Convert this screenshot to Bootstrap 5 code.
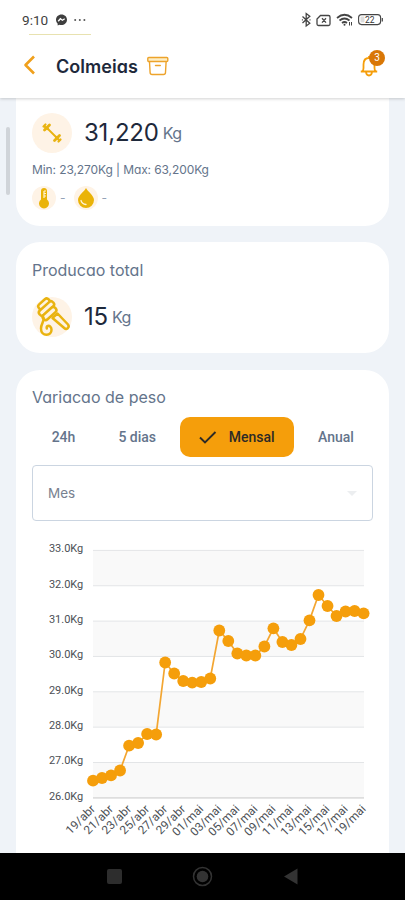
<!DOCTYPE html>
<html lang="pt">
<head>
<meta charset="utf-8">
<meta name="viewport" content="width=device-width, initial-scale=1">
<title>Colmeias</title>
<link href="https://cdn.jsdelivr.net/npm/bootstrap@5.3.0/dist/css/bootstrap.min.css" rel="stylesheet">
<style>
body{height:900px;overflow:hidden;background:#eff3f8;font-family:Inter,"Liberation Sans",sans-serif;font-feature-settings:"cv11";color:#1e293b}
svg{display:block;flex:none}
svg text{font-family:Roboto,sans-serif}
.status{height:40px;padding:0 22px;font:400 13.6px/40px Roboto,sans-serif;color:#3f3f3f}
.dots{margin-left:7px}
.title-bar{height:58px;padding:0 16px 6px 22px}
.top{background:#fff;box-shadow:0 1px 3px rgba(0,0,0,.18);z-index:2}
.underline-tab{left:29px;top:34px;width:62px;height:1px;background:#e8e2b0}
.title{font-size:18px;font-weight:600;letter-spacing:.05px;line-height:26px;margin-left:19px;padding-top:1px}
.box-icon{margin-left:9px}
.bell{margin-right:11px}
.bell-count{left:9px;top:-5px;width:16px;height:16px;background:#d97706;color:#fff;font:400 10px/16px Roboto,sans-serif}
.page-body{height:755px;padding:0 16px}
.scroll-thumb{left:6px;top:29px;width:4px;height:68px;border-radius:2px;background:#d0d4d9}
.panel{background:#fff;border-radius:24px;padding:0 16px}
.panel-weight{height:128px;border-radius:0 0 24px 24px;padding-top:14px}
.panel-total{height:111px;margin-top:16px;padding-top:16px}
.panel-chart{height:530px;margin-top:17px;padding-top:15px}
.round{width:40px;height:40px;background:#fef3e6}
.round-sm{width:24px;height:24px;background:#fef3e6}
.value{font-size:24px;line-height:36px;margin-left:12px;padding-top:3px;letter-spacing:-.2px}
.unit{font-size:16px;color:#64748b;margin-left:4px;letter-spacing:-.5px;position:relative;top:-2px}
.range{font-size:12px;line-height:18px;color:#64748b;margin-top:8px;letter-spacing:-.1px}
.readings{margin-top:7px}
.dash{font-size:12px;color:#94a3b8}
.drop-wrap{margin-left:8px}
.heading{font-size:16px;font-weight:400;line-height:24px;color:#64748b;letter-spacing:0}
.total-row{margin-top:14px}
.tabs{height:40px;margin-top:8px}
.tabs button{border:0;background:none;padding:0;font:500 14px/39px Roboto,sans-serif;color:#64748b;height:40px}
.tabs .active{background:#f59e0b;color:#2d2a26;border-radius:10px;width:114.5px}
.tabs .tab-a{flex:0 0 63px}
.tabs .tab-b{flex:0 0 84.5px}
.tabs .tab-d{flex:0 0 84px;margin-right:-6px}
.mensal{margin-left:12px}
.picker{height:56px;margin-top:8px;border:1px solid #cbd5e1;border-radius:4px;padding:0 15px;font-size:13.5px;color:#78818f}
.android{height:47px;background:#000}
</style>
<script src="https://cdn.jsdelivr.net/npm/bootstrap@5.3.0/dist/js/bootstrap.bundle.min.js"></script>
</head>
<body>
<header class="top position-relative">
 <div class="status d-flex align-items-center">
  <span>9:10</span>
  <svg class="ms-2" width="11" height="12" viewBox="0 0 11 12"><path d="M5.5 .5C2.3.5 0 2.8 0 5.8c0 1.5.6 2.8 1.6 3.8L1.7 11.5 3.4 10.8c3.9 1.1 7.6-1.300 7.6-5C11 2.800 8.700.5 5.500.5z" fill="#3f3f3f"/><path d="M2.200 7.200l2.200-2.500 2 1.500 2.300-1.500" fill="none" stroke="#fff" stroke-width="1.300"/></svg>
  <svg class="dots" width="12" height="4" viewBox="0 0 12 4" fill="#555"><circle cx="1.200" cy="2" r="1"/><circle cx="5.800" cy="2" r="1"/><circle cx="10.400" cy="2" r="1"/></svg>
  <svg class="ms-auto" width="83" height="16" viewBox="300 12 83 16" fill="none" stroke="#444" stroke-width="1.300"><path d="M302.500 16.500l7.300 6.800-3.600 2.700v-12.500l3.600 2.700-7.300 6.800"/><path d="M301.900 19.800h1M309.500 19.800h1"/><path d="M320.500 15.500h8q1.500 0 1.500 1.500v7q0 1.500-1.500 1.500h-10q-1.500 0-1.500-1.500v-5zM322 18.300l4 4.300m0-4.300l-4 4.300"/><path d="M337 18q7.500-6.500 15 0M339.500 20.500q5-4 10 0M342 23q2.500-2 5 0" stroke-width="1.700"/><circle cx="344.500" cy="24.700" r="1" fill="#444" stroke="none"/><path d="M349.500 22v3.500m2-3.500v3.500" stroke-width="1"/><rect x="358.600" y="14.600" width="22" height="10" rx="3" stroke-width="1.100"/><rect x="360.500" y="16.500" width="4" height="6" rx="1" fill="#ddd" stroke="none"/><path d="M382.300 18v3.500" stroke-width="1.200"/><text x="369.800" y="22.800" font-size="8.500" text-anchor="middle" fill="#333" stroke="none">22</text></svg>
 </div>
 <div class="position-absolute underline-tab"></div>
 <div class="title-bar d-flex align-items-center">
  <svg width="15" height="22" viewBox="0 0 15 22"><path d="M12 1.500L3.500 10 12 18.500" fill="none" stroke="#f0a01c" stroke-width="2.600" stroke-linejoin="round"/></svg>
  <h1 class="title mb-0">Colmeias</h1>
  <svg class="box-icon" width="22" height="20" viewBox="0 0 22 20" fill="none" stroke="#eda32b" stroke-width="1.400"><rect x=".8" y="1.500" width="20" height="4" rx="1" fill="#fdeec6"/><path d="M2.500 5.800l.6 10.700q.1 2 2 2h11.400q1.900 0 2-2l.6-10.700M8.500 9.500h4.800" stroke-linecap="round"/></svg>
  <div class="position-relative ms-auto bell">
   <svg width="18" height="22" viewBox="1 0 18 22" fill="none" stroke="#f59e0b" stroke-width="1.800" stroke-linejoin="round"><path d="M10 1v2M1.800 16.500h16.400M3.200 16.500q1.300-1 1.300-3.500V9.500C4.500 5.600 6.500 3 10 3s5.500 2.600 5.500 6.500v3.500q0 2.500 1.300 3.500M7 17q.4 3.500 3 3.500t3-3.500"/></svg>
   <span class="position-absolute rounded-circle text-center bell-count">3</span>
  </div>
 </div>
</header>
<main class="page-body position-relative overflow-hidden">
 <div class="position-absolute scroll-thumb"></div>
 <section class="panel panel-weight">
  <div class="d-flex align-items-center">
   <div class="round rounded-circle d-flex align-items-center justify-content-center"><svg width="22" height="22" viewBox="0 0 22 22" stroke="#e9b310" stroke-linecap="round"><path d="M6 6l10 10" stroke-width="1.800"/><path d="M3.500 8L8.500 3M13.500 18.500l5-5" stroke-width="2.800"/><path d="M2.500 4.500l2-2M4 5l3 2M17.500 19.500l2-2M15 15l3 3" stroke-width="2.200"/></svg></div>
   <div class="value">31,220<span class="unit">Kg</span></div>
  </div>
  <div class="range">Min: 23,270Kg | Max: 63,200Kg</div>
  <div class="d-flex align-items-center readings dash">
   <div class="round-sm rounded-circle d-flex align-items-center justify-content-center"><svg width="12" height="22" viewBox="0 0 12 22"><path d="M3 4a3 3 0 0 1 6 0v8.500a5 5 0 1 1-6 0z" fill="#eab308"/><path d="M6 4v7M6 4h2M6 6.500h2M6 9h2" stroke="#fff3d6" stroke-width="1.200"/></svg></div>
   <span class="ms-1">-</span>
   <div class="round-sm rounded-circle d-flex align-items-center justify-content-center drop-wrap"><svg width="18" height="22" viewBox="0 0 18 22"><path d="M9 1C7.500 4.500 1 8.300 1 13a8 8 0 0 0 16 0C17 8.300 10.500 4.500 9 1z" fill="#eab308"/><path d="M4 13.500q1 3.500 5 4" fill="none" stroke="#fff3d6" stroke-width="1.300" stroke-linecap="round"/></svg></div>
   <span class="ms-1">-</span>
  </div>
 </section>
 <section class="panel panel-total">
  <h2 class="heading mb-0">Producao total</h2>
  <div class="d-flex align-items-center total-row">
   <div class="round rounded-circle"><svg width="40" height="40" viewBox="32 297 40 40" fill="none" stroke="#e9b310" stroke-width="2.500" stroke-linecap="round" stroke-linejoin="round"><g fill="#fef3e2"><path d="M53.500 317l4-3.500 10.500 11q1.500 2-.2 3.700-1.800 1.500-3.600-.2L52.500 318z"/><rect x="37.500" y="301" width="13" height="6" rx="2.700" transform="rotate(-42 44 304)"/><rect x="37.500" y="305.500" width="18" height="6" rx="2.700" transform="rotate(-42 46.500 308.500)"/><rect x="41.500" y="310.500" width="16" height="6" rx="2.700" transform="rotate(-42 49.500 313.500)"/></g><path d="M43.500 317.500c1 4-2.500 6-2.500 11 0 4 2.500 6.300 5.500 6.300 3 0 5-2 5-5s-2-4.300-3.700-3.800q-1.500.5-1 2.500"/></svg></div>
   <div class="value">15<span class="unit">Kg</span></div>
  </div>
 </section>
 <section class="panel panel-chart">
  <h2 class="heading mb-0">Variacao de peso</h2>
  <div class="tabs d-flex">
   <button class="tab-a">24h</button><button class="tab-b">5 dias</button>
   <button class="active flex-shrink-0 d-flex align-items-center justify-content-center"><svg width="18" height="14" viewBox="0 0 18 14"><path d="M1 7.500l5 5L16.500 2" fill="none" stroke="#2d2a26" stroke-width="1.900"/></svg><span class="mensal">Mensal</span></button>
   <button class="tab-d">Anual</button>
  </div>
  <div class="picker d-flex align-items-center justify-content-between"><span>Mes</span><svg width="10" height="5" viewBox="0 0 10 5"><path d="M0 0h10L5 5z" fill="#eceef0"/></svg></div>
  <svg id="chart" width="341" height="325" viewBox="32 521 341 325"></svg>
 </section>
</main>
<footer class="android d-flex align-items-center justify-content-center">
 <svg width="405" height="47" viewBox="0 853 405 47"><rect x="107" y="869" width="15" height="15" rx="2" fill="#2d2d2d"/><circle cx="202.500" cy="876.500" r="9" fill="none" stroke="#333" stroke-width="1.500"/><circle cx="202.500" cy="876.500" r="5.800" fill="#333"/><path d="M284 876.500l13.500-8v16z" fill="#333"/></svg>
</footer>
<script>
const ys=[780.7,778,775.3,770.5,745.7,743,734,734.5,662.5,673.5,681,682.7,682,678.5,630.5,641,653.5,655.5,655.5,646.5,628.3,642,645,639,620.3,595,606,616,611.5,611,613.3];
const step=9.02,top0=550.4,gap=35.35;
let out='';
for(let i=0;i<7;i+=2)out+=`<rect x="93" y="${top0+i*gap}" width="271" height="${gap}" fill="#f9f9f9"/>`;
for(let i=0;i<8;i++){
 const y=top0+i*gap;
 out+=`<path d="M93 ${y}H364" stroke="${i==7?'#dedede':'#e3e5e7'}" stroke-width="${i==7?1.6:1}"/>`;
 out+=`<text x="83.300" y="${y+1.8}" text-anchor="end" font-size="11" fill="#4b4f55">${33-i}.0Kg</text>`;
}
out+=`<polyline fill="none" stroke="#f3a632" stroke-width="1.700" points="${ys.map((y,i)=>`${93+i*step},${y}`).join(' ')}"/>`;
out+=ys.map((y,i)=>`<circle cx="${93+i*step}" cy="${y}" r="5.900" fill="#f59e0b"/>`).join('');
['19/abr','21/abr','23/abr','25/abr','27/abr','29/abr','01/mai','03/mai','05/mai','07/mai','09/mai','11/mai','13/mai','15/mai','17/mai','19/mai'].forEach((t,i)=>{
 const x=96+i*step*2;
 out+=`<text x="${x}" y="809.500" text-anchor="end" font-size="11.800" letter-spacing=".15" fill="#4b4f55" transform="rotate(-45 ${x} 809.500)">${t}</text>`;
});
document.getElementById('chart').innerHTML=out;
</script>
</body>
</html>
